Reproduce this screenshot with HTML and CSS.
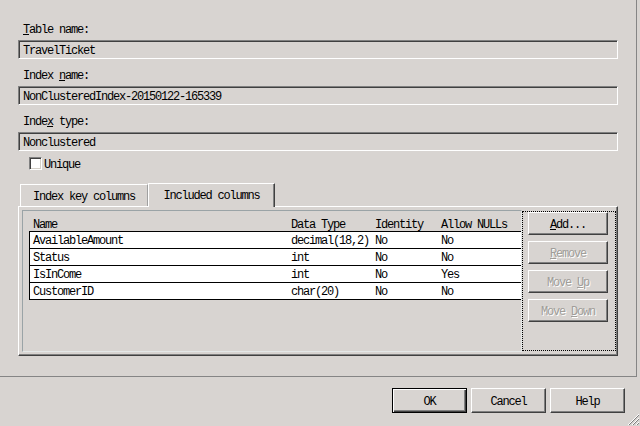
FILE: index.html
```html
<!DOCTYPE html>
<html>
<head>
<meta charset="utf-8">
<link rel="stylesheet" href="styles.css">
</head>
<body>
<div class="dialog">
  <div class="main">
    <div class="label"><u>T</u>able name:</div>
    <div class="textbox">TravelTicket</div>
    <div class="label">Index <u>n</u>ame:</div>
    <div class="textbox">NonClusteredIndex-20150122-165339</div>
    <div class="label">Inde<u>x</u> type:</div>
    <div class="textbox">Nonclustered</div>
    <div class="check-row"><span class="checkbox"></span><span class="check-label">Unique</span></div>
    <div class="tabs">
      <div class="tab">Index key columns</div>
      <div class="tab active">Included columns</div>
    </div>
    <div class="panel">
      <div class="grid-frame">
        <div class="grid-head cols"><span>Name</span><span>Data Type</span><span>Identity</span><span>Allow NULLs</span></div>
        <div class="rows">
          <div class="row cols"><span>AvailableAmount</span><span>decimal(18,2)</span><span>No</span><span>No</span></div>
          <div class="row cols"><span>Status</span><span>int</span><span>No</span><span>No</span></div>
          <div class="row cols"><span>IsInCome</span><span>int</span><span>No</span><span>Yes</span></div>
          <div class="row cols"><span>CustomerID</span><span>char(20)</span><span>No</span><span>No</span></div>
        </div>
      </div>
      <div class="btn-group">
        <div class="btn"><u>A</u>dd...</div>
        <div class="btn disabled"><u>R</u>emove</div>
        <div class="btn disabled">Move <u>U</u>p</div>
        <div class="btn disabled">Move <u>D</u>own</div>
      </div>
    </div>
  </div>
  <div class="footer">
    <div class="btn big default">OK</div>
    <div class="btn big">Cancel</div>
    <div class="btn big">Help</div>
    <svg class="grip" width="13" height="13" viewBox="0 0 13 13">
      <line x1="12" y1="1" x2="1" y2="12" stroke="#ffffff" stroke-width="1"/>
      <line x1="12" y1="2" x2="2" y2="12" stroke="#808080" stroke-width="1"/>
      <line x1="12" y1="5" x2="5" y2="12" stroke="#ffffff" stroke-width="1"/>
      <line x1="12" y1="6" x2="6" y2="12" stroke="#808080" stroke-width="1"/>
      <line x1="12" y1="9" x2="9" y2="12" stroke="#ffffff" stroke-width="1"/>
      <line x1="12" y1="10" x2="10" y2="12" stroke="#808080" stroke-width="1"/>
    </svg>
  </div>
</div>
</body>
</html>
```

FILE: styles.css
```css
html, body {
  margin: 0;
  padding: 0;
  background: #d8d4d1;
}
body {
  width: 640px;
  height: 426px;
  overflow: hidden;
  font-family: "Liberation Mono", "DejaVu Sans Mono", monospace;
  font-size: 12px;
  letter-spacing: -1.2px;
  color: #000;
}
u { text-decoration: underline; text-underline-offset: 1px; }
.dialog {
  width: 640px;
  height: 426px;
  display: flex;
  flex-direction: column;
}
.main {
  box-sizing: border-box;
  width: 637px;
  height: 377px;
  border-right: 1px solid #858585;
  border-bottom: 1px solid #858585;
  padding: 21px 18px 0 18px;
  display: flex;
  flex-direction: column;
  flex: none;
}
.label {
  height: 12px;
  padding-top: 2px;
  line-height: 14px;
  padding-left: 5px;
  margin-bottom: 5px;
}
.textbox {
  box-sizing: border-box;
  height: 19px;
  line-height: 17px;
  padding-top: 2px;
  padding-left: 4px;
  border: 1px solid;
  border-color: #808080 #ffffff #ffffff #808080;
  box-shadow: inset 1px 1px 0 #404040;
  margin-bottom: 8px;
  white-space: nowrap;
}
.check-row {
  display: flex;
  align-items: flex-start;
  height: 13px;
  margin-top: -2px;
  padding-left: 11px;
}
.checkbox {
  box-sizing: border-box;
  width: 13px;
  height: 13px;
  background: #fff;
  border: 1px solid;
  border-color: #808080 #ffffff #ffffff #808080;
  box-shadow: inset 1px 1px 0 #404040, inset -1px -1px 0 #d4d0c8;
}
.check-label {
  margin-left: 2px;
  line-height: 13px;
  padding-top: 2px;
}
.tabs {
  display: flex;
  align-items: flex-end;
  margin-top: 13px;
  padding-left: 2px;
}
.tab {
  box-sizing: border-box;
  height: 22px;
  width: 128px;
  line-height: 21px;
  padding-top: 2px;
  text-align: center;
  border-top: 1px solid #ffffff;
  border-left: 1px solid #ffffff;
  border-right: 1px solid #a0a0a0;
}
.tab.active {
  position: relative;
  width: 127px;
  height: 24px;
  margin-bottom: -1px;
  background: #d8d4d1;
  border-right: 1px solid #404040;
  box-shadow: inset -1px 0 0 #808080;
  line-height: 23px;
  padding-top: 1px;
}
.panel {
  box-sizing: border-box;
  width: 600px;
  height: 150px;
  border: 1px solid;
  border-color: #ffffff #404040 #404040 #ffffff;
  box-shadow: inset -1px -1px 0 #808080;
  display: flex;
  align-items: flex-start;
  padding: 3px 0 0 3px;
}
.grid-frame {
  box-sizing: border-box;
  width: 500px;
  height: 142px;
  border: 1px solid;
  border-color: #9aa3a6 #e4e8e8 #e4e8e8 #9aa3a6;
}
.cols {
  display: grid;
  grid-template-columns: 258px 84px 66px 1fr;
}
.cols span {
  padding-left: 3px;
  white-space: nowrap;
}
.grid-head {
  margin-left: 6px;
  padding-left: 1px;
  padding-top: 6px;
  height: 14px;
  line-height: 16px;
}
.rows {
  margin-left: 6px;
  border-bottom: 1px solid #000;
}
.row {
  background: #fff;
  border-top: 1px solid #000;
  border-left: 1px solid #000;
  height: 15px;
  padding-top: 1px;
  line-height: 16px;
}
.btn-group {
  box-sizing: border-box;
  width: 94px;
  height: 140px;
  margin-top: 1px;
  border: 1px dotted #000;
  display: flex;
  flex-direction: column;
  gap: 6px;
  padding-left: 5px;
}
.btn {
  box-sizing: border-box;
  width: 80px;
  height: 23px;
  line-height: 21px;
  padding-top: 2px;
  text-align: center;
  border: 1px solid;
  border-color: #ffffff #404040 #404040 #ffffff;
  box-shadow: inset -1px -1px 0 #808080;
  white-space: nowrap;
}
.btn.disabled {
  color: #a09d99;
  text-shadow: 1px 1px 0 #ffffff;
}
.footer {
  flex: none;
  height: 49px;
  display: flex;
  justify-content: flex-end;
  align-items: flex-start;
  padding-top: 11px;
  box-sizing: border-box;
  gap: 4px;
}
.btn.big {
  width: 75px;
  height: 25px;
  line-height: 22px;
  padding-top: 2px;
}
.btn.default {
  border: 1px solid #000;
  box-shadow: inset 1px 1px 0 #ffffff, inset -1px -1px 0 #404040, inset -2px -2px 0 #808080;
}
.grip {
  align-self: flex-end;
  margin-left: -2px;
  flex: none;
}
```
